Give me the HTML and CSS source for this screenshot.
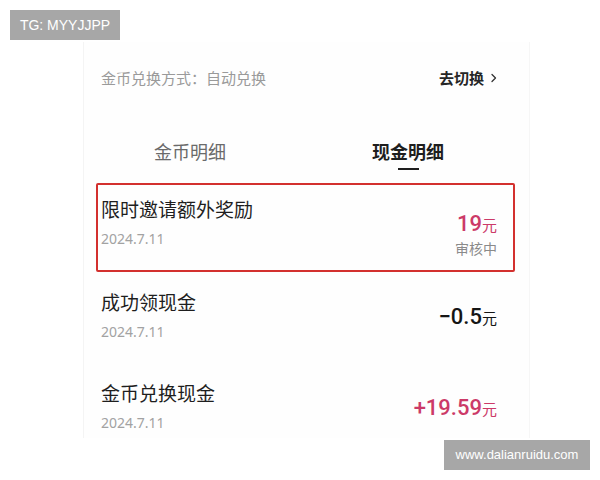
FILE: index.html
```html
<!DOCTYPE html>
<html lang="zh-CN">
<head>
<meta charset="utf-8">
<title>现金明细</title>
<link rel="stylesheet" href="styles.css">
</head>
<body>
<div class="page">
  <div class="card">
    <div class="header">
      <span class="mode">金币兑换方式：自动兑换</span>
      <span class="switch">去切换<svg class="chev" width="6" height="10" viewBox="0 0 6 10"><path d="M1 1.5 L4.5 5 L1 8.5" fill="none" stroke="#333" stroke-width="1.3" stroke-linecap="round" stroke-linejoin="round"/></svg></span>
    </div>
    <div class="tabs">
      <div class="tab">金币明细</div>
      <div class="tab active">现金明细</div>
    </div>
    <div class="list">
      <div class="row marked">
        <div class="info">
          <div class="title">限时邀请额外奖励</div>
          <div class="date">2024.7.11</div>
        </div>
        <div class="side">
          <div class="amt pink"><span class="num">19</span><span class="unit">元</span></div>
          <div class="status">审核中</div>
        </div>
      </div>
      <div class="row">
        <div class="info">
          <div class="title">成功领现金</div>
          <div class="date">2024.7.11</div>
        </div>
        <div class="side">
          <div class="amt"><span class="num">−0.5</span><span class="unit">元</span></div>
        </div>
      </div>
      <div class="row">
        <div class="info">
          <div class="title">金币兑换现金</div>
          <div class="date">2024.7.11</div>
        </div>
        <div class="side">
          <div class="amt pink"><span class="num">+19.59</span><span class="unit">元</span></div>
        </div>
      </div>
    </div>
  </div>
  <div class="wm wm-top">TG: MYYJJPP</div>
  <div class="wm wm-bottom">www.dalianruidu.com</div>
</div>
</body>
</html>
```
FILE: styles.css
```css
html, body {
  margin: 0;
  padding: 0;
  background: #ffffff;
}
body {
  font-family: "Noto Sans", "Noto Sans CJK SC", sans-serif;
  color: #1e1e1e;
}
.page {
  position: relative;
  width: 600px;
  height: 480px;
  overflow: hidden;
  padding-top: 42px;
  box-sizing: border-box;
}
.card {
  margin-left: 83px;
  width: 447px;
  height: 396px;
  box-sizing: border-box;
  background: #fefefe;
  border-left: 1px solid #f4f4f4;
  border-right: 1px solid #f6f6f6;
}
.header {
  display: flex;
  justify-content: space-between;
  align-items: center;
  padding: 24px 32px 0 17px;
  height: 24px;
  line-height: 24px;
}
.mode {
  font-size: 15px;
  color: #9a9a9a;
}
.switch {
  display: flex;
  align-items: center;
  font-size: 15px;
  font-weight: 700;
  color: #262626;
}
.chev {
  margin-left: 7px;
}
.tabs {
  display: grid;
  grid-template-columns: 218px 218px;
  margin: 49px 0 0 -3px;
}
.tab {
  display: flex;
  flex-direction: column;
  align-items: center;
  font-size: 18px;
  line-height: 26px;
  color: #6a6a6a;
}
.tab::after {
  content: "";
  width: 21px;
  height: 2px;
  margin-top: 3px;
  background: transparent;
}
.tab.active {
  color: #1e1e1e;
  font-weight: 700;
}
.tab.active::after {
  background: #1e1e1e;
}
.list {
  margin-top: 13px;
}
.row {
  display: flex;
  justify-content: space-between;
  align-items: flex-start;
  padding: 18px 32px 21px 17px;
}
.row.marked {
  margin: 0 14px 0 12px;
  padding: 12px 16px 11px 3px;
  border: 2px solid #d3302e;
  border-radius: 2px;
}
.title {
  font-size: 19px;
  line-height: 26px;
  color: #1e1e1e;
}
.date {
  margin-top: 6px;
  font-size: 14px;
  line-height: 20px;
  color: #a2a2a2;
}
.side {
  padding-top: 15px;
  text-align: right;
}
.amt {
  line-height: 24px;
  color: #151515;
}
.amt .num {
  font-family: Roboto, "Noto Sans", sans-serif;
  font-size: 22px;
  font-weight: 500;
}
.amt .unit {
  font-size: 15px;
}
.amt.pink {
  color: #cc3a68;
}
.status {
  margin-top: 2px;
  font-size: 14px;
  line-height: 20px;
  color: #8a8a8a;
}
.wm {
  position: absolute;
  background: #a7a7a7;
  color: #ffffff;
  font-family: "Liberation Sans", Arial, sans-serif;
  text-align: center;
  box-sizing: border-box;
}
.wm-top {
  left: 10px;
  top: 10px;
  width: 110px;
  height: 30px;
  line-height: 30px;
  font-size: 14px;
}
.wm-bottom {
  left: 444px;
  top: 440px;
  width: 146px;
  height: 30px;
  line-height: 30px;
  font-size: 13px;
}
```
